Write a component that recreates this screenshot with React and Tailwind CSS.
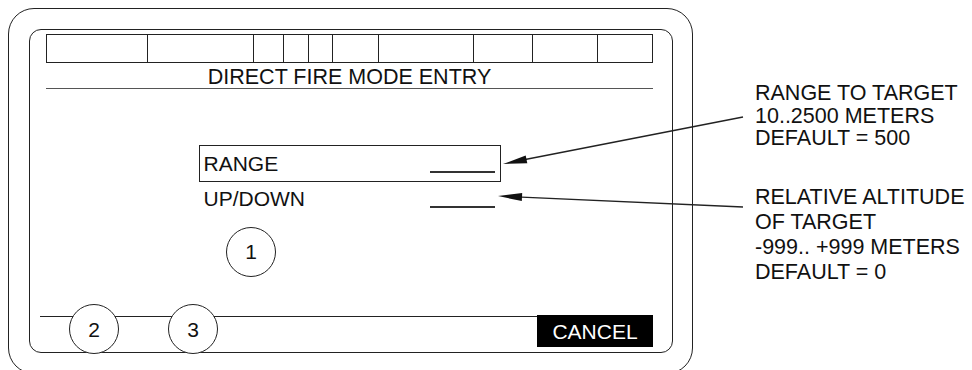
import React from "react";

const font = { fontFamily: '"Liberation Sans", Arial, sans-serif' };

function Circle({ n, className = "" }) {
  return (
    <div
      className={`w-[50px] h-[50px] rounded-full border-[1.5px] border-[#222] bg-white flex items-center justify-center text-[21px] leading-[21px] text-[#111] ${className}`}
    >
      {n}
    </div>
  );
}

export default function App() {
  const cells = ["w-[99.5px]", "w-[106px]", "w-[30px]", "w-[25px]", "w-[24px]", "w-[46px]", "w-[95px]", "w-[59px]", "w-[65px]"];
  return (
    <div
      className="relative w-[972px] h-[370px] overflow-hidden bg-white flex text-[#111]"
      style={font}
    >
      {/* device frame */}
      <div className="ml-[8px] mt-[8px] w-[685px] h-[366px] shrink-0 rounded-[26px] border-[1.5px] border-[#222] pt-[19.5px] pl-[19.5px] pr-[18.5px]">
        <div className="relative w-[644px] h-[324px] rounded-[12px] border-[1.5px] border-[#222] flex flex-col">
          {/* status bar */}
          <div className="ml-[16.5px] mr-[18.5px] mt-[4.5px] h-[29px] border-[1.5px] border-[#222] flex">
            {cells.map((w, i) => (
              <div key={i} className={`${w} h-full ${i > 0 ? "border-l-[1.5px] border-[#222]" : ""}`} />
            ))}
            <div className="flex-1 h-full border-l-[1.5px] border-[#222]" />
          </div>
          {/* title */}
          <div className="ml-[16.5px] mr-[18.5px] mt-[4px] text-center text-[21.5px] leading-[21px] border-b-[1.5px] border-[#555]">
            DIRECT FIRE MODE ENTRY
          </div>
          {/* range */}
          <div className="ml-[169.5px] mt-[55.5px] w-[302px] h-[37px] border-[1.5px] border-[#222] flex justify-between pl-[3.5px] pr-[5.5px]">
            <span className="mt-[7.75px] text-[21px] leading-[21px]">RANGE</span>
            <span className="mt-[25.5px] w-[65px] h-[1.5px] bg-[#333]" />
          </div>
          {/* up/down */}
          <div className="ml-[169.5px] w-[302px] h-[37px] border-[1.5px] border-transparent flex justify-between pl-[3.5px] pr-[5.5px]">
            <span className="mt-[5.75px] text-[21px] leading-[21px]">UP/DOWN</span>
            <span className="mt-[23.5px] w-[65px] h-[1.5px] bg-[#333]" />
          </div>
          <Circle n="1" className="ml-[196.5px] mt-[8px]" />
          {/* bottom bar */}
          <div className="mt-auto mb-[4.5px] ml-[10.5px] mr-[18.5px] flex items-start">
            <div className="flex-1 mt-[0.5px] border-t-[1.5px] border-[#222]" />
            <div className="w-[116px] h-[32px] bg-black text-white flex items-center justify-center text-[21px] leading-[21px]">
              CANCEL
            </div>
          </div>
          <Circle n="2" className="absolute left-[39.5px] top-[274.5px]" />
          <Circle n="3" className="absolute left-[138.5px] top-[274.5px]" />
        </div>
      </div>

      {/* annotations */}
      <div className="ml-[62px] flex flex-col text-[21.5px] whitespace-nowrap">
        <div className="mt-[82px] leading-[22.5px]">
          <div>RANGE TO TARGET</div>
          <div>10..2500 METERS</div>
          <div>DEFAULT = 500</div>
        </div>
        <div className="mt-[35.3px] leading-[25px]">
          <div>RELATIVE ALTITUDE</div>
          <div>OF TARGET</div>
          <div>-999.. +999 METERS</div>
          <div>DEFAULT = 0</div>
        </div>
      </div>

      {/* leader arrows */}
      <svg className="absolute inset-0 pointer-events-none" width="972" height="370" viewBox="0 0 972 370">
        <line x1="520" y1="160.5" x2="743" y2="117" stroke="#222" strokeWidth="1.3" />
        <polygon points="503,164 527.3,163.3 525.7,155.5" fill="#111" />
        <line x1="516" y1="196.8" x2="743" y2="207" stroke="#222" strokeWidth="1.3" />
        <polygon points="498,196 521.8,201.1 522.2,193.1" fill="#111" />
      </svg>
    </div>
  );
}
